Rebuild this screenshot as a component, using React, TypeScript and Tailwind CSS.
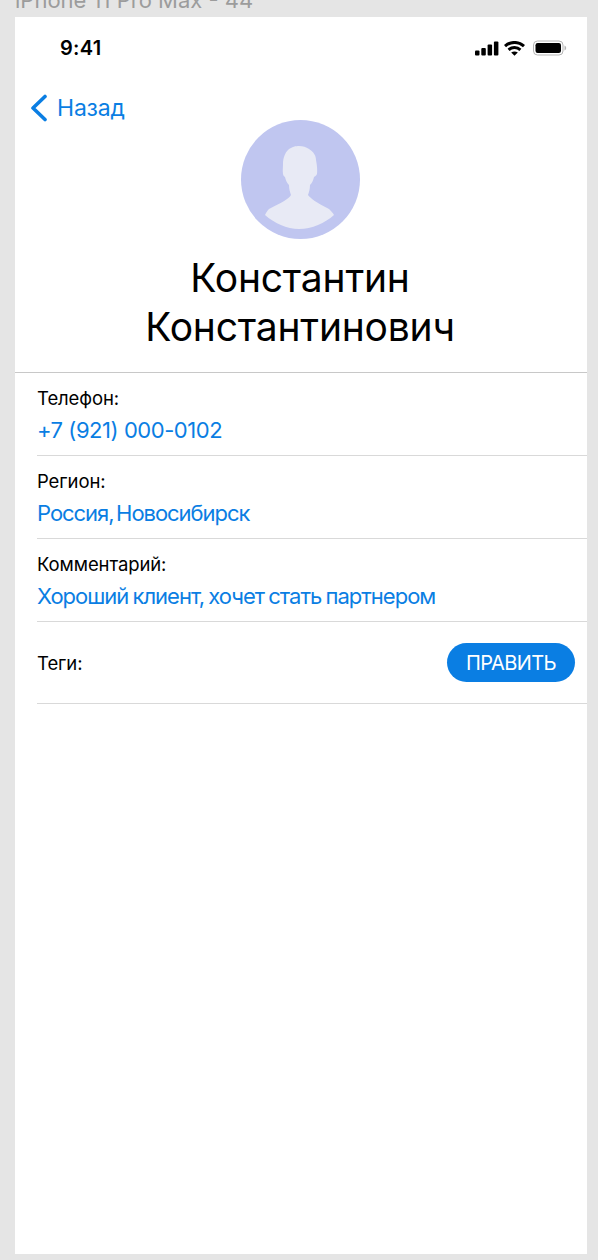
const FONT = "font-['Inter','Noto_Sans',sans-serif]";

function StatusBar() {
  return (
    <div className="flex h-[62px] items-center justify-between pl-[45px] pr-[20px]">
      <span className="text-[20px] font-semibold leading-none tracking-[0.3px] text-black">9:41</span>
      <div className="flex items-center gap-[5px]">
        <svg width="24" height="15" viewBox="0 0 24 15" fill="#000">
          <rect x="0" y="9.5" width="4.5" height="5" rx="1" />
          <rect x="6.3" y="7" width="4.5" height="7.5" rx="1" />
          <rect x="12.6" y="3.5" width="4.5" height="11" rx="1" />
          <rect x="18.9" y="0.5" width="4.5" height="14" rx="1" />
        </svg>
        <svg width="21" height="15" viewBox="0 0 21 15" fill="none" stroke="#000" strokeWidth="3">
          <path d="M1 5.2C6.4 0.2 14.6 0.2 20 5.2" />
          <path d="M4.6 8.800C7.900 5.800 13.100 5.800 16.400 8.800" />
          <path d="M10.500 14.800L7.200 11.600C9.200 10.100 11.800 10.100 13.800 11.600Z" fill="#000" stroke="none" />
        </svg>
        <svg width="34" height="16" viewBox="0 0 34 16" fill="none" className="ml-[3px]">
          <rect x="0.5" y="1" width="29.5" height="14" rx="4" stroke="#b5b5b5" />
          <rect x="2.5" y="3" width="25.5" height="10" rx="2.2" fill="#000" />
          <path d="M31.5 5.500C32.600 6 33.200 7 33.200 8C33.200 9 32.600 10 31.500 10.500Z" fill="#b5b5b5" />
        </svg>
      </div>
    </div>
  );
}

function Avatar() {
  return (
    <div className="flex h-[119px] w-[119px] items-start justify-center rounded-full bg-[#c0c6f0] pt-[26px]">
      <svg width="70" height="83" viewBox="0 0 70 83" fill="#e8eaf5">
        <path d="M23 4C27 0.500 31 0 34 0C38 0 41 1 44 3C49 6 51 10 51 14C52 19 52.500 24 52 28C51 30 50 30.500 49 31C48 35 47 37 45 39C45 43 44 46 43 49C45 52 52 57 64 63C66 65 68 67 69 69C60 77 47 83 34 83C22 83 9 77 0 69C1 67 2 65 4 63C16 57 24 53 26 49C25 46 24 43 24 39C22 37 21 35 20 31C19 30.500 18.500 30 18 28C17.500 24 18 21 18 18C18 12 20 7 23 4Z" />
      </svg>
    </div>
  );
}

function InfoRow({ label, value, valueClass }: { label: string; value: string; valueClass: string }) {
  return (
    <div className="flex h-[83px] flex-col border-b border-[#d9d9d9] pt-[13px]">
      <span className="text-[18.5px] leading-[24px] tracking-[-0.1px] text-black">{label}</span>
      <span className={`mt-[5px] whitespace-nowrap text-[22px] leading-[30px] text-[#0a7ee3] ${valueClass}`}>{value}</span>
    </div>
  );
}

export default function App() {
  return (
    <div className={`flex h-[1260px] w-[598px] flex-col overflow-hidden bg-[#e5e5e5] ${FONT}`}>
      {/* frame caption, cut off by the top of the page */}
      <div className="flex h-[17px] items-end overflow-hidden pb-[6px] pl-[15px]">
        <span className="whitespace-nowrap text-[22px] leading-none text-[#9c9c9c]">iPhone 11 Pro Max - 44</span>
      </div>

      <div className="ml-[15px] mr-[11px] flex h-[1237px] flex-col bg-white">
        <StatusBar />

        {/* Back */}
        <div className="flex h-[41px] items-center gap-[9px] pl-[15px] pt-[17px]">
          <svg width="18" height="28" viewBox="0 0 18 28" fill="none" stroke="#0a7ee3" strokeWidth="3.6" strokeLinecap="round" strokeLinejoin="round">
            <path d="M15 2.500L3 14L15 25.500" />
          </svg>
          <span className="text-[23px] leading-none tracking-[-0.2px] text-[#0a7ee3]">Назад</span>
        </div>

        {/* Profile */}
        <div className="flex h-[253px] flex-col items-center border-b border-[#c8c8c8] pr-[2px]">
          <Avatar />
          <h1 className="mt-[14px] text-center text-[39px] font-normal leading-[49px] tracking-[-0.2px] text-black">
            Константин
            <br />
            Константинович
          </h1>
        </div>

        {/* Details */}
        <div className="flex flex-col pl-[22px]">
          <InfoRow label="Телефон:" value="+7 (921) 000-0102" valueClass="tracking-[-0.45px]" />
          <InfoRow label="Регион:" value="Россия, Новосибирск" valueClass="tracking-[-1.05px] [word-spacing:-2.5px]" />
          <InfoRow
            label="Комментарий:"
            value="Хороший клиент, хочет стать партнером"
            valueClass="tracking-[-1px] [word-spacing:-1px]"
          />
          <div className="flex h-[82px] items-center justify-between border-b border-[#d9d9d9] pr-[12px]">
            <span className="text-[18.5px] leading-[24px] tracking-[-0.1px] text-black">Теги:</span>
            <button className="flex h-[39px] w-[128px] items-center justify-center rounded-full bg-[#0a7ee3] text-[20px] tracking-[-0.6px] text-white">
              ПРАВИТЬ
            </button>
          </div>
        </div>
      </div>
    </div>
  );
}
